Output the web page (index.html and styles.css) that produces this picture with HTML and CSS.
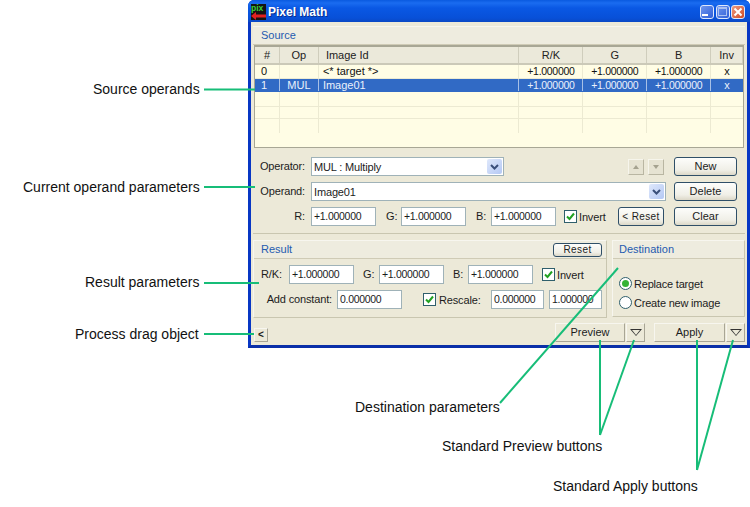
FILE: index.html
```html
<!DOCTYPE html>
<html lang="en">
<head>
<meta charset="utf-8">
<title>Pixel Math</title>
<link rel="stylesheet" href="styles.css">
</head>
<body>
<div class="canvas">
  <span class="note note-source">Source operands</span>
  <span class="note note-current">Current operand parameters</span>
  <span class="note note-result">Result parameters</span>
  <span class="note note-drag">Process drag object</span>
  <span class="note note-dest">Destination parameters</span>
  <span class="note note-preview">Standard Preview buttons</span>
  <span class="note note-apply">Standard Apply buttons</span>

  <div class="window">
    <div class="titlebar">
      <svg class="appicon" width="15" height="16" viewBox="0 0 15 16"><rect width="15" height="16" fill="#141414"/><text class="appicon-text" x="0" y="7">pix</text><path d="M4 12h11" stroke="#e02020" stroke-width="3"/><path d="M0 12l5-4v8z" fill="#e02020"/></svg>
      <span class="title">Pixel Math</span>
      <span class="winbtns">
        <span class="winbtn"><i class="glyph-min"></i></span>
        <span class="winbtn"><i class="glyph-max"></i></span>
        <span class="winbtn winbtn-close"><svg width="12" height="12" viewBox="0 0 12 12"><path d="M2.500 2.500l7 7M9.500 2.500l-7 7" stroke="#fff" stroke-width="2"/></svg></span>
      </span>
    </div>
    <div class="client">
      <div class="sectionhead source-head">Source</div>
      <div class="table">
        <div class="row row-head">
          <span class="c c1">#</span><span class="c c2">Op</span><span class="c c3 left">Image Id</span><span class="c c4">R/K</span><span class="c c5">G</span><span class="c c6">B</span><span class="c c7">Inv</span>
        </div>
        <div class="row">
          <span class="c c1 left">0</span><span class="c c2"></span><span class="c c3 left">&lt;* target *&gt;</span><span class="c c4 num">+1.000000</span><span class="c c5 num">+1.000000</span><span class="c c6 num">+1.000000</span><span class="c c7">x</span>
        </div>
        <div class="row row-sel">
          <span class="c c1 left">1</span><span class="c c2">MUL</span><span class="c c3 left">Image01</span><span class="c c4 num">+1.000000</span><span class="c c5 num">+1.000000</span><span class="c c6 num">+1.000000</span><span class="c c7">x</span>
        </div>
        <div class="row"><span class="c c1"></span><span class="c c2"></span><span class="c c3"></span><span class="c c4"></span><span class="c c5"></span><span class="c c6"></span><span class="c c7"></span></div>
        <div class="row"><span class="c c1"></span><span class="c c2"></span><span class="c c3"></span><span class="c c4"></span><span class="c c5"></span><span class="c c6"></span><span class="c c7"></span></div>
        <div class="row row-last"><span class="c c1"></span><span class="c c2"></span><span class="c c3"></span><span class="c c4"></span><span class="c c5"></span><span class="c c6"></span><span class="c c7"></span></div>
      </div>

      <div class="operand">
        <div class="oprow">
          <label class="lab lab-op">Operator:</label>
          <div class="combo combo-short"><span>MUL : Multiply</span><i class="arrowbtn"><svg width="9" height="6" viewBox="0 0 9 6"><path d="M1 1l3.500 3.500L8 1" fill="none" stroke="#3a4f7a" stroke-width="2"/></svg></i></div>
          <span class="updown">
            <span class="tiny"><i class="tri-up"></i></span>
            <span class="tiny"><i class="tri-down"></i></span>
          </span>
          <button class="btn btn-side">New</button>
        </div>
        <div class="oprow">
          <label class="lab lab-op">Operand:</label>
          <div class="combo combo-long"><span>Image01</span><i class="arrowbtn"><svg width="9" height="6" viewBox="0 0 9 6"><path d="M1 1l3.500 3.500L8 1" fill="none" stroke="#3a4f7a" stroke-width="2"/></svg></i></div>
          <button class="btn btn-side">Delete</button>
        </div>
        <div class="oprow">
          <label class="lab lab-op">R:</label>
          <div class="field f65">+1.000000</div>
          <label class="lab lab-g">G:</label>
          <div class="field f65">+1.000000</div>
          <label class="lab lab-g">B:</label>
          <div class="field f65">+1.000000</div>
          <span class="check check-inv"><svg width="9" height="9" viewBox="0 0 9 9"><path d="M1 4.500l2.500 2.500L8 1.500" fill="none" stroke="#21a121" stroke-width="2"/></svg></span>
          <span class="checktext">Invert</span>
          <button class="btn btn-reset">&lt; Reset</button>
          <button class="btn btn-side">Clear</button>
        </div>
      </div>

      <div class="lower">
        <div class="panel panel-result">
          <div class="sectionhead panelhead"><span>Result</span><button class="btn btn-small">Reset</button></div>
          <div class="resrow">
            <label class="lab lab-rk">R/K:</label>
            <div class="field f65">+1.000000</div>
            <label class="lab lab-rg">G:</label>
            <div class="field f65">+1.000000</div>
            <label class="lab lab-rb">B:</label>
            <div class="field f65">+1.000000</div>
            <span class="check check-rinv"><svg width="9" height="9" viewBox="0 0 9 9"><path d="M1 4.500l2.500 2.500L8 1.500" fill="none" stroke="#21a121" stroke-width="2"/></svg></span>
            <span class="checktext">Invert</span>
          </div>
          <div class="resrow">
            <label class="lab lab-add">Add constant:</label>
            <div class="field f65">0.000000</div>
            <span class="check check-res"><svg width="9" height="9" viewBox="0 0 9 9"><path d="M1 4.500l2.500 2.500L8 1.500" fill="none" stroke="#21a121" stroke-width="2"/></svg></span>
            <span class="checktext text-res">Rescale:</span>
            <div class="field f53">0.000000</div>
            <div class="field f53">1.000000</div>
          </div>
        </div>
        <div class="panel panel-dest">
          <div class="sectionhead panelhead panelhead-dest">Destination</div>
          <div class="radios">
            <div class="radiorow"><span class="radio radio-on"></span><span>Replace target</span></div>
            <div class="radiorow"><span class="radio"></span><span>Create new image</span></div>
          </div>
        </div>
      </div>

      <div class="bottom">
        <button class="drag">&lt;</button>
        <span class="grow"></span>
        <span class="split split-preview"><button class="flat flat-main">Preview</button><button class="flat flat-drop"><i class="tri-open"></i></button></span>
        <span class="split"><button class="flat flat-main flat-apply">Apply</button><button class="flat flat-drop"><i class="tri-open"></i></button></span>
      </div>
    </div>
  </div>

  <svg class="leaders" width="750" height="507" viewBox="0 0 750 507">
    <g stroke="#17bd78" stroke-width="2" fill="none">
      <path d="M204 89.500H255"/>
      <path d="M204 187H255"/>
      <path d="M204 283H259"/>
      <path d="M204 334H254"/>
      <path d="M500 403L618 268"/>
      <path d="M600 340V435"/>
      <path d="M634 340L600 435"/>
      <path d="M697 340V470"/>
      <path d="M733 340L697 470"/>
    </g>
  </svg>
</div>
</body>
</html>
```
FILE: styles.css
```css
* { box-sizing: border-box; }
html, body { margin: 0; padding: 0; background: #fff; }
body { font-family: "Liberation Sans", Arial, sans-serif; font-size: 11px; color: #1c1c1c; }
button { font: inherit; color: inherit; padding: 0; margin: 0; }
i { display: block; }

.canvas { position: relative; width: 750px; height: 507px; overflow: hidden; }

.note { position: absolute; font-size: 14px; line-height: 16px; color: #111; white-space: nowrap; }
.note-source { left: 93px; top: 81px; }
.note-current { left: 23px; top: 179px; }
.note-result { left: 85px; top: 274px; }
.note-drag { left: 75px; top: 326px; }
.note-dest { left: 355px; top: 399px; }
.note-preview { left: 442px; top: 438px; }
.note-apply { left: 553px; top: 478px; }

.leaders { position: absolute; left: 0; top: 0; pointer-events: none; }

.window { position: absolute; left: 248px; top: 0; width: 502px; height: 348px; background: #0a3fd0; border: 3px solid #0837c4; border-top: 0; border-bottom-color: #0a2fa8; border-radius: 6px 6px 0 0; display: flex; flex-direction: column; }
.titlebar { height: 22px; margin: 0 -3px; padding: 1px 5px 0 3px; background: linear-gradient(#0a5ae0 0, #1a6cf0 3px, #0a58e4 8px, #0850d8 18px, #0a48c4 22px); border-radius: 6px 6px 0 0; display: flex; align-items: center; flex: none; }
.appicon { flex: none; }
.appicon-text { font-size: 8.500px; font-weight: 700; fill: #3ad13a; }
.title { margin-left: 2px; font-size: 12px; font-weight: 700; color: #fff; text-shadow: 1px 1px 0 #0a2f90; flex: 1; }
.winbtns { display: flex; gap: 1.500px; }
.winbtn { width: 14px; height: 14px; border: 1px solid #dfe8fb; border-radius: 3px; background: linear-gradient(135deg, #6f96ee, #2f5fd8); display: flex; align-items: center; justify-content: center; }
.glyph-min { width: 6px; height: 2px; background: #fff; margin: 7px 4px 0 0; }
.glyph-max { width: 9px; height: 9px; border: 1px solid #a9c0f2; border-top-width: 2px; }
.winbtn-close { background: linear-gradient(135deg, #ec9a80, #cf4a25); }

.client { flex: 1; background: #ece9d8; padding: 4px 2px 0 2px; display: flex; flex-direction: column; min-height: 0; }

.sectionhead { color: #1f5bb0; line-height: 16px; height: 19px; padding: 0 8px; border-top: 1px solid #f7f6ef; border-bottom: 1px solid #cfcbb6; background: #eeecdf; }
.source-head { flex: none; }

.table { margin-left: 1px; width: 490px; height: 103px; background: #fffde5; border: 1px solid #a8a795; border-top-width: 2px; flex: none; }
.row { display: flex; height: 14px; line-height: 13px; border-bottom: 1px solid #ecead2; color: #111; }
.row-head { height: 18px; line-height: 16px; background: #ebe9da; border-bottom: 2px solid #cbc9b8; }
.row-head .c { color: #222; border-right: 1px solid #cfcdbc; }
.row-head .left { padding-left: 7px; }
.row-sel { height: 13px; background: #316ac5; color: #fff; border-bottom-color: #316ac5; }
.row-sel .c { border-right-color: #a8c0e6; color: #eaf1fc; }
.row-sel + .row { height: 15px; }
.row-sel + .row + .row { height: 12px; }
.row-last { height: 14px; border-bottom: 0; }
.c { display: block; text-align: center; border-right: 1px solid #ecead2; white-space: nowrap; overflow: hidden; }
.left { text-align: left; padding-left: 4px; }
.c1 { width: 25px; }
.c1.left { padding-left: 6px; }
.c2 { width: 39px; }
.c3 { width: 201px; }
.c4, .c5, .c6 { width: 64px; }
.c7 { width: 32px; border-right: 0; }
.num { font-size: 10.500px; letter-spacing: -.3px; }

.operand { padding-top: 9px; display: flex; flex-direction: column; gap: 6px; height: 86px; border-bottom: 1px solid #c9c6b0; flex: none; }
.oprow { display: flex; align-items: center; height: 19px; }
.lab { text-align: right; flex: none; line-height: 19px; letter-spacing: -.15px; }
.lab-op { width: 51px; margin-left: 1px; margin-right: 6px; }
.lab-g { width: 10px; margin-left: 10px; margin-right: 5px; text-align: left; }

.combo { height: 19px; background: #fff; border: 1px solid #9fb2b8; display: flex; align-items: center; justify-content: space-between; padding: 0 1px 0 2px; flex: none; letter-spacing: -.15px; }
.combo-short { width: 193px; }
.combo-long { width: 355px; margin-right: 8px; }
.arrowbtn { width: 15px; height: 15px; border-radius: 2px; background: linear-gradient(135deg, #dfe8fb, #b4c8f4); display: flex; align-items: center; justify-content: center; }

.field { height: 19px; line-height: 17px; background: #fff; border: 1px solid #9fb2b8; padding-left: 2px; flex: none; white-space: nowrap; overflow: hidden; font-size: 10.500px; letter-spacing: -.3px; }
.f65 { width: 65px; }
.f53 { width: 53px; }

.updown { display: flex; gap: 4px; margin-left: 124px; margin-right: 10px; }
.tiny { width: 16px; height: 16px; background: #e6e3d2; border: 1px solid; border-color: #f6f5ec #b9b6a2 #b9b6a2 #f6f5ec; display: flex; align-items: center; justify-content: center; }
.tri-up { border: 3px solid transparent; border-top: 0; border-bottom: 4px solid #a5a28f; }
.tri-down { border: 3px solid transparent; border-bottom: 0; border-top: 4px solid #a5a28f; }

.btn { height: 19px; line-height: 15px; background: linear-gradient(#fdfdfb, #f0efe7 70%, #dcd8c8); border: 1px solid #2f4f68; border-radius: 3px; text-align: center; flex: none; }
.btn-side { width: 63px; }
.btn-reset { width: 46px; margin-left: 12px; margin-right: 10px; font-size: 10px; letter-spacing: .4px; }
.btn-small { width: 49px; height: 14px; line-height: 12px; font-size: 10px; letter-spacing: .4px; color: #222; }

.check { width: 13px; height: 13px; background: #fff; border: 1px solid #2f5f6c; display: flex; align-items: center; justify-content: center; flex: none; }
.check-inv { margin-left: 8px; }
.check-rinv { margin-left: 9px; }
.check-res { margin-left: 21px; }
.checktext { margin-left: 2px; flex: none; width: 27px; white-space: nowrap; letter-spacing: -.15px; }
.text-res { margin-left: 3px; width: 42px; margin-right: 10px; }

.lower { display: flex; gap: 5px; padding-top: 6px; flex: none; }
.panel { height: 78px; border: 1px solid; border-color: #f7f6ef #c9c6b0 #c9c6b0 #f7f6ef; flex: none; }
.panel-result { width: 354px; }
.panel-dest { width: 133px; height: 77px; }
.panelhead { display: flex; justify-content: space-between; align-items: center; border-top: 0; padding: 0 4px 0 7px; height: 18px; line-height: 17px; }
.panelhead-dest { padding-left: 6px; }
.resrow { display: flex; align-items: center; height: 19px; padding-left: 7px; }
.panelhead + .resrow { margin-top: 6px; margin-bottom: 6px; }
.lab-rk { width: 24px; margin-right: 4px; text-align: left; }
.lab-rg { width: 11px; margin-left: 9px; margin-right: 5px; text-align: left; }
.lab-rb { width: 11px; margin-left: 9px; margin-right: 4px; text-align: left; }
.lab-add { width: 71px; margin-right: 5px; }
.f53 + .f53 { margin-left: 5px; }

.radios { padding: 18px 0 0 6px; display: flex; flex-direction: column; gap: 6px; }
.radiorow { display: flex; align-items: center; gap: 2px; height: 13px; letter-spacing: -.2px; }
.radio { width: 13px; height: 13px; border-radius: 50%; border: 1px solid #2f5f6c; background: #fff; flex: none; display: flex; align-items: center; justify-content: center; }
.radio-on::after { content: ""; width: 7px; height: 7px; border-radius: 50%; background: #35b335; }

.bottom { display: flex; align-items: center; padding: 4px 0 0 1px; height: 24px; flex: none; }
.grow { flex: 1; }
.drag { width: 14px; height: 14px; line-height: 12px; margin-top: 6px; border: 1px solid; border-color: #f7f6ef #a8a595 #a8a595 #f7f6ef; background: #ece9d8; font-weight: 700; font-size: 10px; }
.split { display: flex; gap: 1px; }
.split-preview { margin-right: 9px; }
.flat { height: 19px; border: 1px solid; border-color: #f7f6ef #a8a595 #a8a595 #f7f6ef; background: #ece9d8; text-align: center; display: block; }
.flat-main { width: 70px; }
.flat-apply { width: 71px; }
.flat-drop { width: 19px; display: flex; align-items: center; justify-content: center; }
.tri-open { width: 0; height: 0; border-left: 6px solid transparent; border-right: 6px solid transparent; border-top: 7px solid #333; position: relative; }
.tri-open::after { content: ""; position: absolute; left: -4px; top: -6px; border-left: 4px solid transparent; border-right: 4px solid transparent; border-top: 5px solid #ece9d8; }
```
